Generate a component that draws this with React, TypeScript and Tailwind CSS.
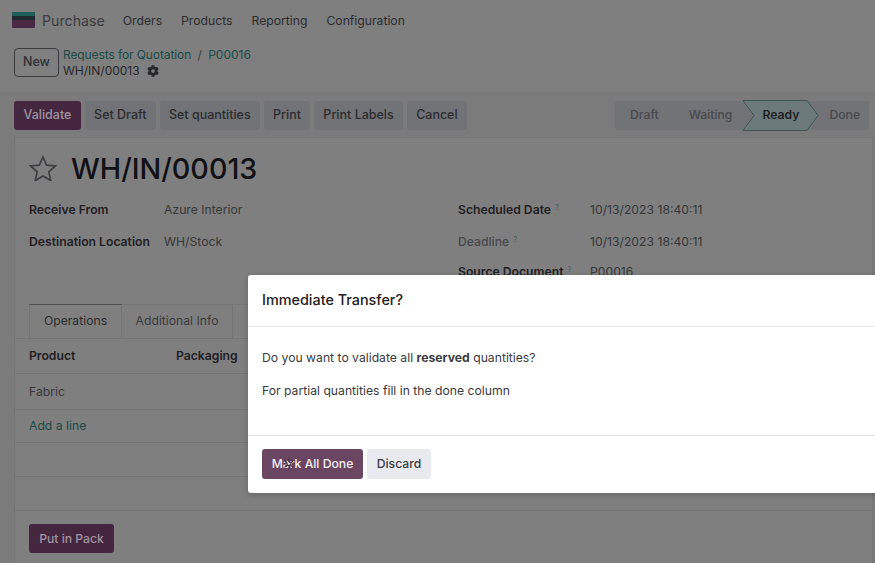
import React from "react";
import { FaCog } from "react-icons/fa";

function Cursor() {
  return (
    <svg className="absolute left-[21px] top-[8px]" width="12" height="14" viewBox="0 0 12 14">
      <g stroke="#4a3145" strokeWidth="1.2" strokeLinecap="round">
        <path d="M6 2v10M2 4l8 6M10 4l-8 6M1 7h10" />
      </g>
      <path d="M4 4l4 3-3 1z" fill="#e8e0e6" />
    </svg>
  );
}

function Field({ label, value, muted, q, w, h = "h-[32px]" }: { label: string; value: string; muted?: boolean; q?: boolean; w: string; h?: string }) {
  return (
    <div className={`flex items-center ${h}`}>
      <div className={`${w} shrink-0 text-[12.2px] ${muted ? "font-medium text-[#47484b]" : "font-semibold text-[#1f2023]"}`}>
        {label}
        {q && <sup className="ml-[4px] text-[8px] font-normal text-[#3f5f5c]">?</sup>}
      </div>
      <div className="text-[12.2px] text-[#36373a]">{value}</div>
    </div>
  );
}

function Gray({ children }: { children: React.ReactNode }) {
  return (
    <div className="h-[29px] px-[9.2px] flex items-center rounded-[3px] bg-[#727377] text-[12.5px] font-medium text-[#2b2c2f]">
      {children}
    </div>
  );
}

export default function App() {
  return (
    <div className="relative w-[875px] h-[563px] overflow-hidden bg-[#7b7b7b] font-['Inter','Liberation_Sans',sans-serif]">
      <div className="h-[40px] flex items-center pl-[12px] pt-[2px] text-[12.2px] text-[#2b2c2f] bg-[#7f7f7f]">
        <svg width="23" height="16" viewBox="0 0 23 16" className="mr-[7px] mt-[-3px]">
          <rect width="23" height="16" rx="1" fill="#4a2844" />
          <rect width="23" height="4" fill="#1f5f58" />
          <rect y="4" width="23" height="4" fill="#1d2a30" />
        </svg>
        <span className="text-[14.2px] text-[#3a3b3e]">Purchase</span>
        <div className="flex ml-[18px] gap-[19px]">
          <span>Orders</span>
          <span>Products</span>
          <span>Reporting</span>
          <span>Configuration</span>
        </div>
      </div>

      <div className="h-[53px] flex items-start pl-[14px] pt-[8px] border-b border-[#757575] bg-[#7f7f7f]">
        <div className="w-[45px] h-[29px] flex items-center justify-center rounded-[4px] border border-[#3a3b3e] text-[12.5px] font-medium text-[#2f3034]">
          New
        </div>
        <div className="ml-[4px] mt-[-1px] text-[12px] leading-[16px]">
          <div className="text-[#1c4a46]">
            <span className="tracking-[-0.1px]">Requests for Quotation</span> <span className="mx-[3px] text-[#3a3b3e]">/</span> P00016
          </div>
          <div className="flex items-center gap-[7px] text-[#28292c]">
            WH/IN/00013
            <FaCog className="text-[12px] text-[#26272a]" />
          </div>
        </div>
      </div>

      <div className="h-[44px] flex items-center pl-[14px] pr-[6px] justify-between">
        <div className="flex gap-[4px]">
          <div className="h-[29px] px-[9.5px] flex items-center rounded-[3px] bg-[#44263e] text-[12.5px] font-medium text-[#a093a0]">Validate</div>
          <Gray>Set Draft</Gray>
          <Gray>Set quantities</Gray>
          <Gray>Print</Gray>
          <Gray>Print Labels</Gray>
          <Gray>Cancel</Gray>
        </div>
        <div className="relative h-[29px] w-[254px] rounded-[3px] bg-[#727377] flex items-center text-[12.2px] font-medium text-[#47484b]">
          <svg className="absolute left-[127px] top-[-1px]" width="78" height="31" viewBox="0 0 78 31">
            <path d="M1 .5H65L76 15.500 65 30.500H1L12 15.500Z" fill="#6d7a7b" stroke="#3a5552" />
          </svg>
          <span className="relative ml-[15px]">Draft</span>
          <span className="relative ml-[30px]">Waiting</span>
          <span className="relative ml-[30px] font-semibold text-[#1f2023]">Ready</span>
          <span className="relative ml-[30px]">Done</span>
        </div>
      </div>

      <div className="ml-[14px] mr-[2px] h-[430px] border-x border-t border-[#757575] bg-[#7f7f7f]">
        <div className="px-[14px]">
          <div className="flex items-end h-[56px] gap-[14px] pb-[10px]">
            <svg width="28" height="26" viewBox="0 0 28 26" fill="none" stroke="#3d3e41" strokeWidth="1.700" className="mb-[3px]">
              <path d="M14 2l3.600 8.200 8.900.800-6.700 5.900 2 8.700L14 21.100 6.200 25.600l2-8.700L1.500 11l8.900-.800z" />
            </svg>
            <span className="text-[28.7px] font-medium text-[#101114] leading-none">WH/IN/00013</span>
          </div>
          <div className="flex">
            <div className="w-[429px]">
              <Field label="Receive From" value="Azure Interior" w="w-[135px]" />
              <Field label="Destination Location" value="WH/Stock" w="w-[135px]" />
            </div>
            <div>
              <Field label="Scheduled Date" q value="10/13/2023 18:40:11" w="w-[132px]" />
              <Field label="Deadline" q muted value="10/13/2023 18:40:11" w="w-[132px]" />
              <Field label="Source Document" q value="P00016" w="w-[132px]" h="h-[28px]" />
            </div>
          </div>
        </div>
        <div className="h-[18px]" />
        <div className="flex pl-[14px] h-[35px] border-b border-[#757575] text-[12.2px]">
          <div className="w-[93px] flex items-center justify-center border-x border-t border-x-[#757575] border-t-[#4d4e50] text-[#2b2c2f]">Operations</div>
          <div className="w-[111px] flex items-center justify-center border-r border-t border-[#757575] text-[#3a3b3e]">Additional Info</div>
          <div className="w-[30px] border-r border-t border-[#757575]" />
        </div>
        <div className="flex items-center h-[35px] pl-[14px] pt-[1px] border-b border-[#757575] text-[12.2px] font-semibold text-[#1f2023]">
          <span className="w-[147px]">Product</span>
          <span>Packaging</span>
        </div>
        <div className="flex items-center h-[36px] pl-[14px] pt-[2px] border-b border-[#757575] text-[12.2px] text-[#36373a]">Fabric</div>
        <div className="flex items-center h-[33px] pl-[14px] pt-[1px] border-b border-[#757575] text-[12.2px] text-[#1c4a46]">Add a line</div>
        <div className="h-[34px] border-b border-[#757575]" />
        <div className="h-[34px] border-b border-[#757575]" />
        <div className="pl-[14px] pt-[13px]">
          <div className="w-[85px] h-[29px] pt-[1px] flex items-center justify-center rounded-[3px] bg-[#44263e] text-[12.2px] font-medium text-[#a093a0]">Put in Pack</div>
        </div>
      </div>

      <div className="absolute left-[248px] top-[275px] w-[640px] h-[218px] rounded-[3px] bg-white shadow-[0_2px_6px_rgba(0,0,0,0.2)]">
        <div className="h-[52px] flex items-center pl-[14px] pb-[2px] border-b border-[#e8e9ec] text-[14.4px] font-medium text-[#1f2023]">
          Immediate Transfer?
        </div>
        <div className="h-[109px] pl-[14px] pt-[22px] border-b border-[#e2e3e6] text-[12.2px] text-[#3a3b3e]">
          <div>Do you want to validate all <b className="font-bold">reserved</b> quantities?</div>
          <div className="mt-[15px]">For partial quantities fill in the done column</div>
        </div>
        <div className="flex pl-[14px] pt-[13px] gap-[4px]">
          <div className="relative w-[101px] h-[30px] flex items-center justify-center rounded-[3px] bg-[#6b4662] text-[12.2px] font-medium text-[#f4eff3]">
            Mark All Done
            <Cursor />
          </div>
          <div className="w-[64px] h-[30px] flex items-center justify-center rounded-[3px] bg-[#e8eaef] text-[12.2px] font-medium text-[#3a3b3e]">
            Discard
          </div>
        </div>
      </div>
    </div>
  );
}
